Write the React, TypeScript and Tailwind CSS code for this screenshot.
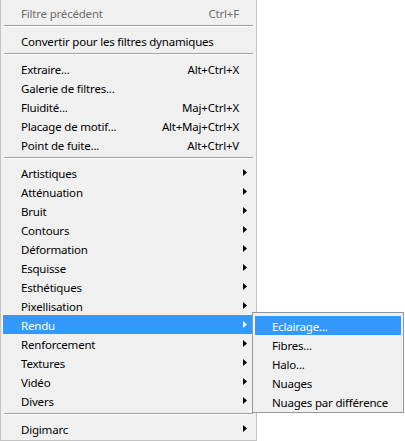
import React from "react";

type Item =
  | { kind: "sep" }
  | { kind: "item"; label: string; shortcut?: string; sub?: boolean; disabled?: boolean; active?: boolean };

const items: Item[] = [
  { kind: "item", label: "Filtre précédent", shortcut: "Ctrl+F", disabled: true },
  { kind: "sep" },
  { kind: "item", label: "Convertir pour les filtres dynamiques" },
  { kind: "sep" },
  { kind: "item", label: "Extraire...", shortcut: "Alt+Ctrl+X" },
  { kind: "item", label: "Galerie de filtres..." },
  { kind: "item", label: "Fluidité...", shortcut: "Maj+Ctrl+X" },
  { kind: "item", label: "Placage de motif...", shortcut: "Alt+Maj+Ctrl+X" },
  { kind: "item", label: "Point de fuite...", shortcut: "Alt+Ctrl+V" },
  { kind: "sep" },
  { kind: "item", label: "Artistiques", sub: true },
  { kind: "item", label: "Atténuation", sub: true },
  { kind: "item", label: "Bruit", sub: true },
  { kind: "item", label: "Contours", sub: true },
  { kind: "item", label: "Déformation", sub: true },
  { kind: "item", label: "Esquisse", sub: true },
  { kind: "item", label: "Esthétiques", sub: true },
  { kind: "item", label: "Pixellisation", sub: true },
  { kind: "item", label: "Rendu", sub: true, active: true },
  { kind: "item", label: "Renforcement", sub: true },
  { kind: "item", label: "Textures", sub: true },
  { kind: "item", label: "Vidéo", sub: true },
  { kind: "item", label: "Divers", sub: true },
  { kind: "sep" },
  { kind: "item", label: "Digimarc", sub: true },
];

const subItems = ["Eclairage...", "Fibres...", "Halo...", "Nuages", "Nuages par différence"];

function Arrow({ white }: { white?: boolean }) {
  return (
    <svg width="4" height="7" viewBox="0 0 4 7" className="block">
      <path d="M0 0 L4 3.5 L0 7 Z" fill={white ? "#ffffff" : "#000000"} />
    </svg>
  );
}

export default function App() {
  return (
    <div
      className="relative w-[405px] h-[441px] bg-white text-[11.5px] tracking-[-0.2px] leading-none"
      style={{ fontFamily: '"Noto Sans", "Open Sans", sans-serif' }}
    >
      <div className="w-[257px] h-[441px] bg-[#f0f0f0] border-l border-r border-b border-[#c2c2c2] pt-[3px] flex flex-col">
        {items.map((it, i) =>
          it.kind === "sep" ? (
            <div key={i} className="h-[9px] pt-[3px] px-[3px]">
              <div className="h-px bg-[#a0a0a0]" />
              <div className="h-px bg-white" />
            </div>
          ) : (
            <div
              key={i}
              className={
                "h-[19px] ml-[2px] mr-[3px] flex items-center pl-[18px] " +
                (it.active ? "bg-[#3399ff] text-white" : it.disabled ? "text-[#6d6d6d]" : "text-black")
              }
            >
              <span className="flex-1 whitespace-nowrap pt-[2px]">{it.label}</span>
              {it.shortcut && <span className="whitespace-nowrap mr-[14px] pt-[2px]">{it.shortcut}</span>}
              {it.sub && (
                <span className="w-[4px] mr-[6px] -mt-[1px]">
                  <Arrow white={it.active} />
                </span>
              )}
            </div>
          )
        )}
      </div>

      <div className="absolute left-[252px] top-[312px] w-[152px] h-[101px] bg-[#f0f0f0] border border-[#979797] pt-[3px] px-[2px]">
        {subItems.map((s, i) => (
          <div
            key={i}
            className={
              "h-[19px] flex items-center pl-[17px] pt-[2px] whitespace-nowrap " +
              (i === 0 ? "bg-[#3399ff] text-white" : "text-black")
            }
          >
            {s}
          </div>
        ))}
      </div>
    </div>
  );
}
